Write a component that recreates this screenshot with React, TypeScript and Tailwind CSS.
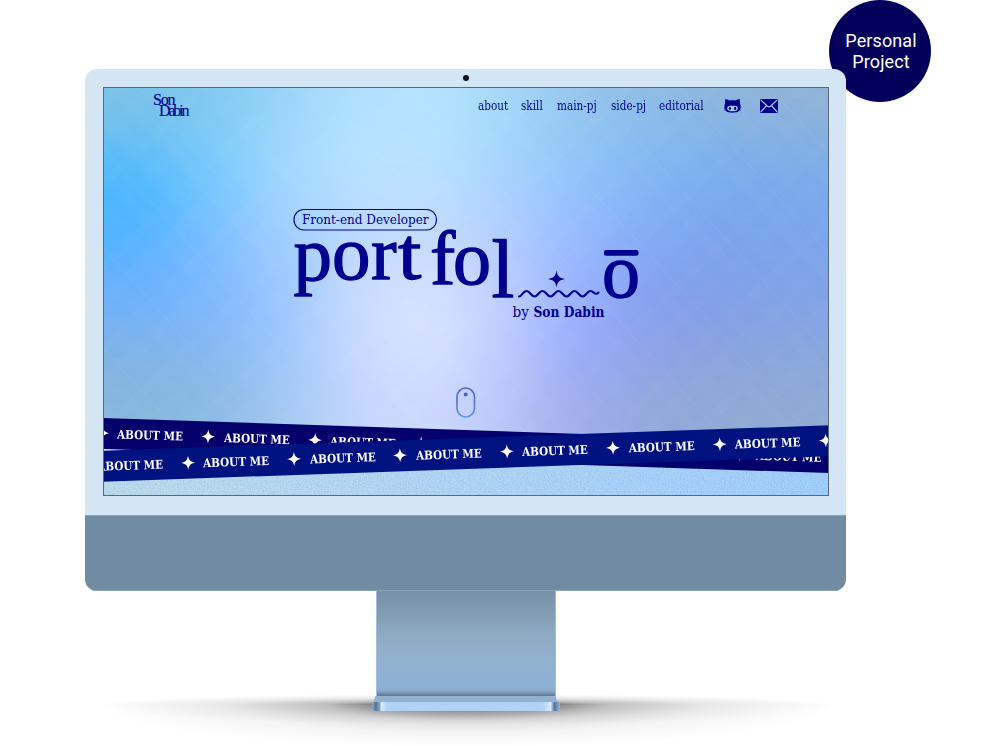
import React from "react";

const NAVY = "#00008f";

const mesh: string[][] = [
  ["#7cc2e6", "#80c8f0", "#98d4f8", "#b0e0ff", "#b4e4ff", "#a4d8fa", "#94c6ee", "#8ebce6", "#8eb4dc", "#90b2d8"],
  ["#5cbcf8", "#7accfc", "#a2daff", "#b8e4ff", "#b8e4ff", "#a4d6fc", "#8cc6f8", "#80bbf2", "#78b2ec", "#7cb0e6"],
  ["#44b6ff", "#74c4ff", "#a0d4ff", "#b8deff", "#bcdeff", "#acd2ff", "#94c0fc", "#80b2f6", "#76a8f0", "#76a8ee"],
  ["#54b2ff", "#7cbeff", "#a2ceff", "#bcd8ff", "#c6dcff", "#b2ccff", "#98baff", "#84aaf6", "#7ca2ee", "#7ea4ec"],
  ["#68b0fe", "#7cb6ff", "#9cc6ff", "#c6dcff", "#d4e2ff", "#bcceff", "#98b4ff", "#829ff2", "#7e9fea", "#80a2e8"],
  ["#78b2f2", "#80b8fa", "#9cc6fe", "#ccdcff", "#dce6ff", "#c0ceff", "#98acff", "#8aa0ec", "#86a0e2", "#84a4e2"],
  ["#84b4de", "#88b6e8", "#a0c6fa", "#c6d8ff", "#d4deff", "#bccafe", "#9caaf4", "#92a4e2", "#8ca6d8", "#8ca8d8"],
  ["#88b8da", "#8cbce0", "#a4c8f0", "#c2d6fc", "#ccd8ff", "#b8c6f8", "#a0aee8", "#94a8dc", "#90aad4", "#90aad4"],
];

function Sparkle({ className }: { className?: string }) {
  return (
    <svg viewBox="-8 -8 16 16" className={className} fill="currentColor">
      <path d="M0-8C.9-2.900 2.900-.9 8 0 2.900.9.9 2.900 0 8-.9 2.900-2.900.9-8 0-2.900-.9-.9-2.900 0-8Z" />
    </svg>
  );
}

function Backdrop() {
  return (
    <svg className="absolute inset-0 h-full w-full" viewBox="0 0 726 409" preserveAspectRatio="none">
      <defs>
        <filter id="soft" x="-20%" y="-20%" width="140%" height="140%" colorInterpolationFilters="sRGB">
          <feGaussianBlur stdDeviation="30" />
        </filter>
        <filter id="grain" x="0" y="0" width="100%" height="100%" colorInterpolationFilters="sRGB">
          <feTurbulence type="fractalNoise" baseFrequency="0.7" numOctaves="2" seed="4" result="noise" />
          <feColorMatrix in="noise" values="0 0 0 0 0.35  0 0 0 0 0.62  0 0 0 0 0.86  2.5 0 0 0 -1.05" result="dots" />
          <feComposite in="dots" in2="SourceGraphic" operator="in" />
        </filter>
        <linearGradient id="floor">
          <stop offset="0" stopColor="#c0dce9" />
          <stop offset=".3" stopColor="#b9d8f1" />
          <stop offset="1" stopColor="#a2cffc" />
        </linearGradient>
        <pattern id="rays" width="67" height="67" patternUnits="userSpaceOnUse" patternTransform="rotate(-42)">
          <rect x="4" width="12" height="67" fill="#fff" opacity=".5" />
          <rect x="25" width="2" height="67" fill="#fff" opacity=".8" />
          <rect x="40" width="18" height="67" fill="#fff" opacity=".35" />
        </pattern>
        <pattern id="raysBack" width="59" height="59" patternUnits="userSpaceOnUse" patternTransform="rotate(46)">
          <rect x="7" width="9" height="59" fill="#fff" opacity=".5" />
          <rect x="30" width="14" height="59" fill="#fff" opacity=".35" />
        </pattern>
      </defs>
      <g filter="url(#soft)">
        {mesh.map((row, r) =>
          row.map((color, c) => (
            <rect
              key={`${r}-${c}`}
              x={c === 0 ? -100 : c * 72.6}
              y={r === 0 ? -100 : r * 44}
              width={c === 0 || c === 9 ? 173.6 : 73.6}
              height={r === 0 || r === 7 ? 145 : 45}
              fill={color}
            />
          )),
        )}
      </g>
      <rect width="726" height="409" fill="url(#rays)" opacity=".03" />
      <rect width="726" height="409" fill="url(#raysBack)" opacity=".03" />
      <path d="M0 361L110 362 473 375 726 384V409H0Z" fill="url(#floor)" />
      <path d="M0 361L110 362 473 375 726 384V409H0Z" filter="url(#grain)" opacity=".28" />
      <path d="M0 361.500H36L0 364Z" fill="#e8f4fa" />
    </svg>
  );
}

function Ribbon({ className, offset }: { className: string; offset: string }) {
  return (
    <div className={`absolute -left-[17px] h-[30.7px] w-[760px] overflow-hidden text-white ${className}`}>
      <div className={`flex h-full ${offset}`}>
        {Array.from({ length: 8 }, (_, i) => (
          <div key={i} className="flex w-[106.4px] shrink-0 items-center gap-[8.5px]">
            <Sparkle className="h-[16px] w-[14px] shrink-0" />
            <span className="mt-[1px] w-[68px] origin-left scale-x-[0.96] whitespace-nowrap font-['DejaVu_Serif_Condensed','DejaVu_Serif',serif] text-[12px] font-bold leading-none">
              ABOUT ME
            </span>
          </div>
        ))}
      </div>
    </div>
  );
}

const links = [
  { label: "about", width: "w-[43px]" },
  { label: "skill", width: "w-[36px]" },
  { label: "main-pj", width: "w-[54px]" },
  { label: "side-pj", width: "w-[48px]" },
  { label: "editorial", width: "w-[65px]" },
];

function Header() {
  return (
    <header className="relative flex h-[38px] items-center text-[#00008f]">
      <svg className="ml-[49px] h-[28px] w-[40px]" viewBox="0 0 40 28" fill={NAVY} stroke={NAVY} strokeWidth=".15" fontFamily="Liberation Serif, serif" fontSize="16">
        <text x="1" y="12.500" textLength="22.500" lengthAdjust="spacing">Son</text>
        <text x="7" y="23.500" textLength="30.500" lengthAdjust="spacing">Dabin</text>
      </svg>
      <nav className="ml-[286px] flex font-['DejaVu_Serif_Condensed','DejaVu_Serif',serif] text-[12.2px]">
        {links.map((l) => (
          <a key={l.label} className={`${l.width} whitespace-nowrap`}>
            <span className="inline-block origin-left scale-x-[0.955]">{l.label}</span>
          </a>
        ))}
      </nav>
      <svg className="h-[14px] w-[17px]" viewBox="0 0 17 14">
        <path fill={NAVY} d="M1.400 0C2.800 .1 4.300 .7 5.300 1.500 7.400 1.200 9.600 1.200 11.700 1.500 12.700 .7 14.200 .1 15.600 0 16.100 1.300 16 2.700 15.700 3.700 16.400 4.700 16.700 6 16.600 7.500 16.500 12 14.200 13.700 8.500 13.700S.5 12 .4 7.500C.3 6 .6 4.700 1.300 3.700 1 2.700 .9 1.300 1.400 0Z" />
        <path fill="#a5c9ec" d="M5.200 7C6.800 6.800 10.200 6.800 11.800 7 13.400 7.200 13.900 8.300 13.800 9.400 13.600 11.600 11.600 12.200 8.500 12.200S3.400 11.600 3.200 9.400C3.100 8.300 3.600 7.200 5.200 7Z" />
        <ellipse cx="5.900" cy="9.400" rx="1.100" ry="1.600" fill={NAVY} />
        <ellipse cx="11.100" cy="9.400" rx="1.100" ry="1.600" fill={NAVY} />
        <path d="M0 8.800L1.400 9M0 11.200L1.700 10.700M17 8.800L15.600 9M17 11.200L15.300 10.700" stroke={NAVY} strokeWidth=".6" />
      </svg>
      <svg className="ml-[19px] h-[14px] w-[18px]" viewBox="0 0 18 14">
        <rect width="18" height="14" rx="1.200" fill={NAVY} />
        <path d="M.8 1L7.500 7.200Q9 8.400 10.500 7.200L17.200 1M.8 13L6.600 6.500M17.200 13L11.400 6.500" fill="none" stroke="#a5c6ea" strokeWidth="1.200" />
      </svg>
    </header>
  );
}

function Title() {
  return (
    <svg className="absolute left-[185px] top-[115px] h-[130px] w-[360px]" viewBox="288 202 360 130" fill={NAVY}>
      <rect x="294" y="209.500" width="142.500" height="20.500" rx="10" fill="none" stroke={NAVY} strokeWidth="1.200" />
      <text x="302" y="224.300" fontFamily="DejaVu Serif Condensed, DejaVu Serif, serif" fontSize="13" textLength="126.500" lengthAdjust="spacingAndGlyphs">Front-end Developer</text>
      <g fontFamily="Liberation Serif, serif" stroke={NAVY} strokeWidth="1.300" strokeLinejoin="round">
        <text y="280 278.500 278.500" x="293.500 332 371" fontSize="77">por</text>
        <text transform="translate(398 278.500) scale(1.120 1)" fontSize="75">t</text>
        <text y="283.500" x="430 453" fontSize="76">fo</text>
        <text y="296.500" x="491.500" fontSize="82">l</text>
        <text y="297" x="602" fontSize="76">o</text>
      </g>
      <rect x="604" y="250" width="34.500" height="5.700" rx="2" />
      <path d="M519 296.500C522 296.500 523 291 526.500 291S531 296.500 534.500 296.500 539 291 542.500 291 547 296.500 550.500 296.500 555 291 558.500 291 563 296.500 566.500 296.500 571 291 574.500 291 579 296.500 582.500 296.500 587 291 590.500 291 595 296.500 598.500 292.500" fill="none" stroke={NAVY} strokeWidth="2.100" strokeLinecap="round" />
      <path transform="translate(556.500 279)" d="M0-8.500C.9-2.900 2.900-.9 8.500 0 2.900.9.9 2.900 0 8.500-.9 2.900-2.900.9-8.500 0-2.900-.9-.9-2.900 0-8.500Z" />
      <g fontFamily="DejaVu Serif Condensed, DejaVu Serif, serif" fontSize="14.500">
        <text x="512.500" y="317" textLength="16.500" lengthAdjust="spacingAndGlyphs">by</text>
        <text x="533.500" y="317" fontWeight="bold" textLength="71" lengthAdjust="spacingAndGlyphs">Son Dabin</text>
      </g>
    </svg>
  );
}

export default function App() {
  return (
    <main className="relative h-[746px] w-[1000px] overflow-hidden bg-white pl-[85px] pt-[69px]">
      <div className="absolute left-[829px] top-0 flex h-[102px] w-[102px] items-center justify-center rounded-full bg-[#03005c] pb-[1px] pl-[2px] text-center font-[Roboto,sans-serif] text-[18px] font-normal leading-[21px] tracking-[0.1px] text-white">
        Personal
        <br />
        Project
      </div>
      <svg className="absolute left-0 top-[680px] h-[66px] w-[1000px]" viewBox="0 680 1000 66">
        <defs>
          <radialGradient id="shade">
            <stop offset="0" stopColor="#000" stopOpacity=".7" />
            <stop offset=".25" stopColor="#000" stopOpacity=".5" />
            <stop offset=".38" stopColor="#000" stopOpacity=".26" />
            <stop offset=".65" stopColor="#000" stopOpacity=".09" />
            <stop offset="1" stopColor="#000" stopOpacity="0" />
          </radialGradient>
          <clipPath id="above"><rect x="0" y="680" width="1000" height="25" /></clipPath>
          <clipPath id="below"><rect x="0" y="705" width="1000" height="41" /></clipPath>
        </defs>
        <g clipPath="url(#above)">
          <ellipse cx="466" cy="705" rx="370" ry="11" fill="url(#shade)" />
        </g>
        <g clipPath="url(#below)">
          <ellipse cx="466" cy="705" rx="370" ry="42" fill="url(#shade)" opacity=".5" />
          <ellipse cx="466" cy="705" rx="370" ry="20" fill="url(#shade)" opacity=".5" />
        </g>
      </svg>
      <div className="relative w-[761px]">
        <div className="relative h-[522px] overflow-hidden rounded-[12px] bg-[#d4e6f3]">
          <div className="flex h-[18px] items-center justify-center">
            <span className="h-[6px] w-[6px] rounded-full bg-[#0b1226]" />
          </div>
          <div className="relative ml-[18px] h-[409px] w-[726px] overflow-hidden">
            <Backdrop />
            <Header />
            <Title />
            <svg className="absolute left-[352px] top-[299px] h-[33px] w-[21px]" viewBox="0 0 21 33">
              <defs>
                <linearGradient id="wheel" x2="0" y2="1">
                  <stop stopColor="#5060c8" />
                  <stop offset="1" stopColor="#5a96ec" />
                </linearGradient>
              </defs>
              <rect x="2" y="2" width="17.500" height="29" rx="8.700" fill="none" stroke="url(#wheel)" strokeWidth="1.700" />
              <circle cx="10.700" cy="8.500" r="2" fill="#4a62cc" />
            </svg>
            <Ribbon className="top-[343px] rotate-[1.900deg] bg-[#05006b]" offset="ml-[8.800px]" />
            <Ribbon className="top-[351.200px] -rotate-[2deg] bg-[#001280]" offset="-ml-[11.700px]" />
            <div className="pointer-events-none absolute inset-0 border border-[#5f6870]" />
          </div>
          <div className="mt-[19px] h-[76px] border-y border-[#8aa3ba] bg-[#718ba2]" />
        </div>
        <div className="mx-auto flex w-[188px] flex-col items-center">
          <div className="h-[105px] w-[180px] border-x border-[#a3bfd8] bg-[linear-gradient(#7890a8,#819bb1_20%,#8faac4_42%,#92b1d0_65%,#8db0d8_92%,#8dabc8_95%,#5b7692)]" />
          <div className="h-[6px] w-[184px] bg-[#92b2d2] [clip-path:polygon(1%_0,99%_0,100%_100%,0_100%)]" />
          <div className="h-[9px] w-[188px] rounded-b-[4px] bg-[linear-gradient(90deg,#8aabc9,#557493_2%,#7fa3c6_4%,#dcebf8_5%,#b0d2f4_8%,#b0d2f4_91%,#dcebf8_95%,#557493_97%,#8fb4d8)]" />
        </div>
      </div>
    </main>
  );
}
